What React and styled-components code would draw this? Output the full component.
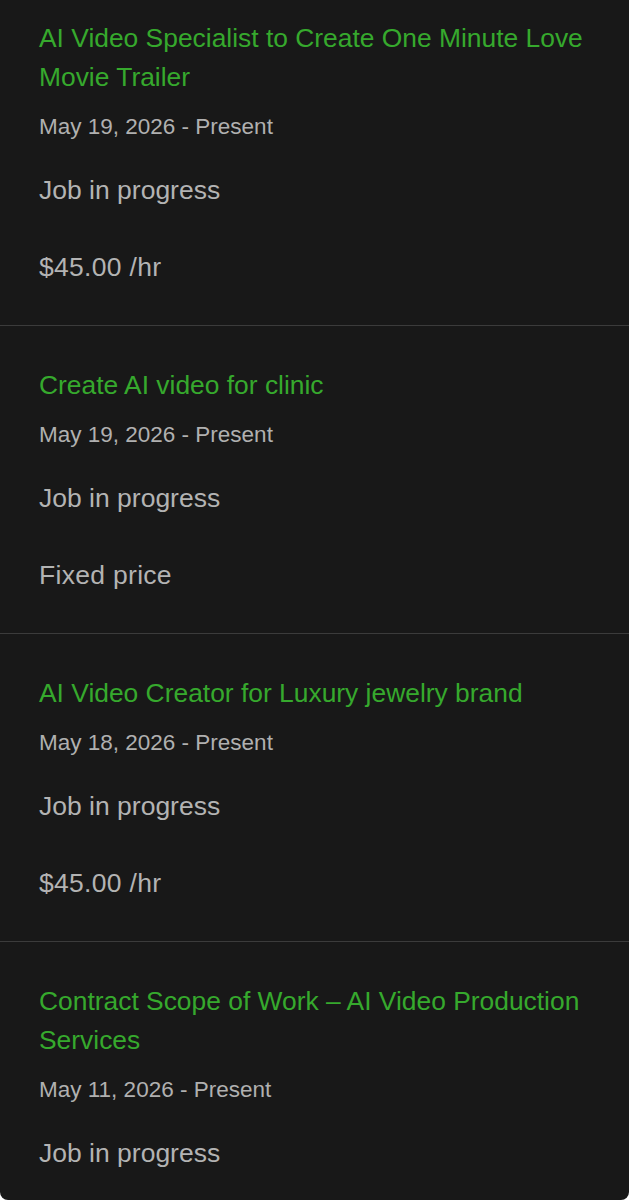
import React from "react";
import styled, { createGlobalStyle } from "styled-components";

const Global = createGlobalStyle`
  html, body { margin: 0; padding: 0; background: #ffffff; }
  body { font-family: "Liberation Sans", Arial, sans-serif; }
`;

const Card = styled.div`
  height: 1200px;
  overflow: hidden;
  background: #181818;
  border-radius: 0 0 8px 8px;
`;

const List = styled.ul`
  list-style: none;
  margin: -21px 0 0;
  padding: 0;
`;

const Item = styled.li`
  padding: 40px 39px 42px;
  border-bottom: 1px solid #3b3b3b;
`;

const Title = styled.a`
  display: block;
  font-size: 26.4px;
  line-height: 39px;
  color: #36a92d;
  text-decoration: none;
`;

const DateRange = styled.div`
  margin-top: 16px;
  font-size: 22.5px;
  line-height: 28px;
  color: #b0b0b0;
`;

const Status = styled.div`
  margin-top: 33px;
  font-size: 26.5px;
  line-height: 32px;
  color: #b3b3b3;
`;

const Price = styled(Status)`
  margin-top: 45px;
  letter-spacing: 0.3px;
`;

const jobs = [
  { title: "AI Video Specialist to Create One Minute Love Movie Trailer", date: "May 19, 2026 - Present", price: "$45.00 /hr" },
  { title: "Create AI video for clinic", date: "May 19, 2026 - Present", price: "Fixed price" },
  { title: "AI Video Creator for Luxury jewelry brand", date: "May 18, 2026 - Present", price: "$45.00 /hr" },
  { title: "Contract Scope of Work \u2013 AI Video Production Services", date: "May 11, 2026 - Present" },
];

export default function App() {
  return (
    <>
      <Global />
      <Card>
        <List>
          {jobs.map((j) => (
            <Item key={j.title}>
              <Title href="#">{j.title}</Title>
              <DateRange>{j.date}</DateRange>
              <Status>Job in progress</Status>
              {j.price && <Price>{j.price}</Price>}
            </Item>
          ))}
        </List>
      </Card>
    </>
  );
}
